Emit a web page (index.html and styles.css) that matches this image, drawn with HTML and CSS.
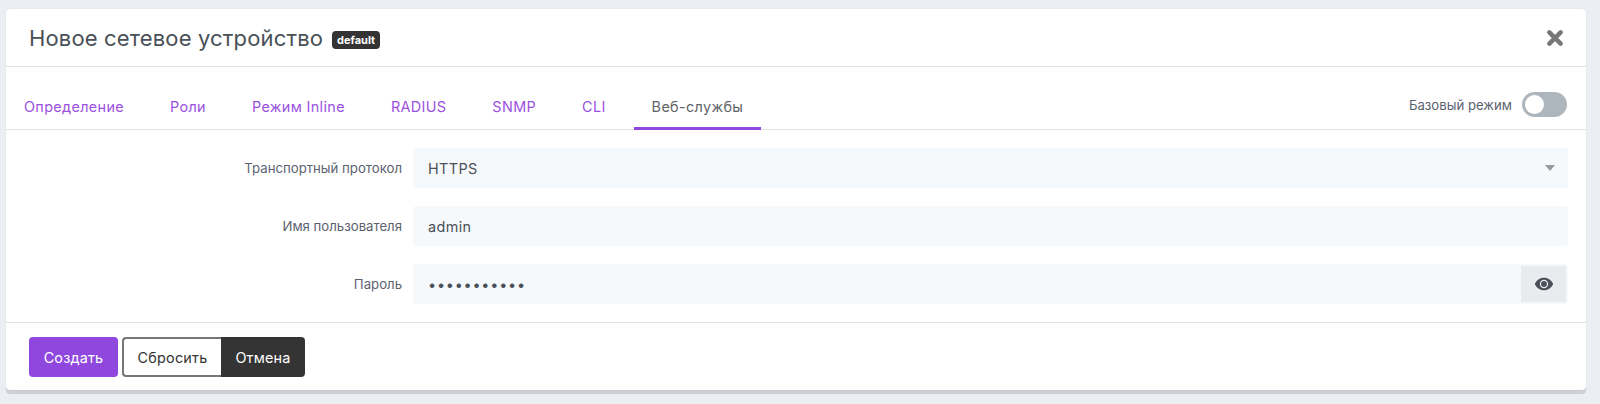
FILE: index.html
```html
<!DOCTYPE html>
<html lang="ru">
<head>
    <meta charset="UTF-8">
    <title>Новое сетевое устройство</title>
    <link rel="stylesheet" href="styles.css">
</head>
<body>

    <div class="card">
        <!-- HEADER -->
        <div class="card-header">
            <h1>Новое сетевое устройство <span class="badge">default</span></h1>
            <svg class="close-icon" viewBox="0 0 16 16" width="18" height="18">
                <path d="M3 3 L13 13 M13 3 L3 13" stroke="#777" stroke-width="4" stroke-linecap="round"/>
            </svg>
        </div>

        <!-- TABS -->
        <div class="tabs">
            <a class="tab">Определение</a>
            <a class="tab">Роли</a>
            <a class="tab">Режим Inline</a>
            <a class="tab">RADIUS</a>
            <a class="tab">SNMP</a>
            <a class="tab">CLI</a>
            <a class="tab active">Веб-службы</a>
            <div class="mode">
                <span>Базовый режим</span>
                <span class="toggle"><span class="knob"></span></span>
            </div>
        </div>

        <!-- FORM -->
        <div class="form">
            <div class="row">
                <label>Транспортный протокол</label>
                <div class="field select">
                    <span>HTTPS</span>
                    <span class="caret"></span>
                </div>
            </div>
            <div class="row">
                <label>Имя пользователя</label>
                <div class="field"><input type="text" value="admin"></div>
            </div>
            <div class="row">
                <label>Пароль</label>
                <div class="field">
                    <input class="secret" type="password" value="12345678901">
                    <span class="eye-btn">
                        <svg viewBox="0 0 24 24" width="20" height="20">
                            <path fill="#495057" d="M12 4.500C7 4.500 2.700 7.600 1 12c1.700 4.400 6 7.500 11 7.500s9.300-3.100 11-7.500c-1.700-4.400-6-7.500-11-7.500zm0 12.500a5 5 0 1 1 0-10 5 5 0 0 1 0 10zm0-8.500a3.500 3.500 0 1 0 0 7 3.500 3.500 0 1 0 0-7z"/>
                        </svg>
                    </span>
                </div>
            </div>
        </div>

        <!-- FOOTER -->
        <div class="card-footer">
            <button class="btn btn-primary">Создать</button>
            <div class="btn-group">
                <button class="btn btn-outline">Сбросить</button>
                <button class="btn btn-dark">Отмена</button>
            </div>
        </div>
    </div>

</body>
</html>
```

FILE: styles.css
```css
* { margin: 0; padding: 0; box-sizing: border-box; }
body {
    background-color: #ebeef3;
    font-family: 'Inter', 'Noto Sans', sans-serif;
    color: #495057;
    height: 404px;
    overflow: hidden;
    padding: 9px 14px 0 6px;
}

.card {
    height: 381px;
    background: white;
    border-radius: 4px;
    box-shadow: 0 0 1px rgba(0, 0, 0, 0.2), 0 4px 0 #cdd1d6;
}

.card-header {
    height: 58px;
    display: flex;
    align-items: center;
    justify-content: space-between;
    padding: 0 22px 0 23px;
    border-bottom: 1px solid #e3e3e3;
}

h1 {
    font-size: 22px;
    font-weight: 400;
    letter-spacing: 0.15px;
    color: #495057;
    display: flex;
    align-items: center;
    gap: 9px;
}

.badge {
    background: #343434;
    color: white;
    font-size: 11px;
    font-weight: 700;
    letter-spacing: 0;
    line-height: 14px;
    padding: 2px 5px;
    border-radius: 4px;
    margin-top: 5px;
}

.tabs {
    height: 63px;
    display: flex;
    align-items: flex-end;
    gap: 10px;
    border-bottom: 1px solid #e3e3e3;
    font-size: 14.4px;
    padding-right: 19px;
}

.tab {
    padding: 0 18px 12px;
    color: #9b51e0;
    letter-spacing: 0.35px;
    border-bottom: 3px solid transparent;
    margin-bottom: -1px;
}

.tab.active {
    color: #5f6368;
    border-bottom-color: #8f47de;
}

.mode {
    margin-left: auto;
    align-self: flex-end;
    display: flex;
    align-items: center;
    gap: 10px;
    font-size: 13.2px;
    color: #5a6270;
    padding-bottom: 12px;
}

.toggle {
    width: 45px;
    height: 25px;
    border-radius: 13px;
    background: #adb5bd;
    padding: 3px;
}

.knob {
    display: block;
    width: 19px;
    height: 19px;
    border-radius: 50%;
    background: white;
}

.form {
    height: 193px;
    padding: 18px 18px 0 0;
    display: flex;
    flex-direction: column;
    gap: 18px;
    border-bottom: 1px solid #e3e3e3;
}

.row {
    display: flex;
    align-items: center;
    height: 40px;
}

.row label {
    width: 396px;
    text-align: right;
    font-size: 13.2px;
    color: #5a6270;
    margin-right: 11px;
    flex-shrink: 0;
}

.field {
    flex: 1;
    height: 40px;
    background: #f5f9fc;
    border-radius: 4px;
    display: flex;
    align-items: center;
    padding-left: 15px;
    font-size: 14.4px;
    letter-spacing: 0.4px;
    color: #495057;
}

.field input {
    flex: 1;
    min-width: 0;
    border: none;
    outline: none;
    background: none;
    font: inherit;
    letter-spacing: inherit;
    color: inherit;
}

.field .secret {
    letter-spacing: 0.8px;
}

.select {
    justify-content: space-between;
    padding-right: 13px;
}

.caret {
    width: 0;
    height: 0;
    border-left: 5.5px solid transparent;
    border-right: 5.5px solid transparent;
    border-top: 6px solid #999;
}

.eye-btn {
    width: 45px;
    height: 36px;
    margin-right: 2px;
    background: #e9ecef;
    display: flex;
    align-items: center;
    justify-content: center;
}

.card-footer {
    display: flex;
    gap: 4px;
    padding: 14px 23px;
}

.btn {
    height: 40px;
    font: inherit;
    font-size: 14.4px;
    letter-spacing: 0.2px;
    border: none;
    border-radius: 4px;
    cursor: pointer;
}

.btn-group { display: flex; }

.btn-primary {
    width: 89px;
    background: #8f47de;
    color: white;
}

.btn-outline {
    width: 99px;
    background: white;
    color: #343434;
    border: 2px solid #777;
    border-right: none;
    border-radius: 4px 0 0 4px;
}

.btn-dark {
    width: 84px;
    background: #343434;
    color: white;
    border-radius: 0 4px 4px 0;
}
```
